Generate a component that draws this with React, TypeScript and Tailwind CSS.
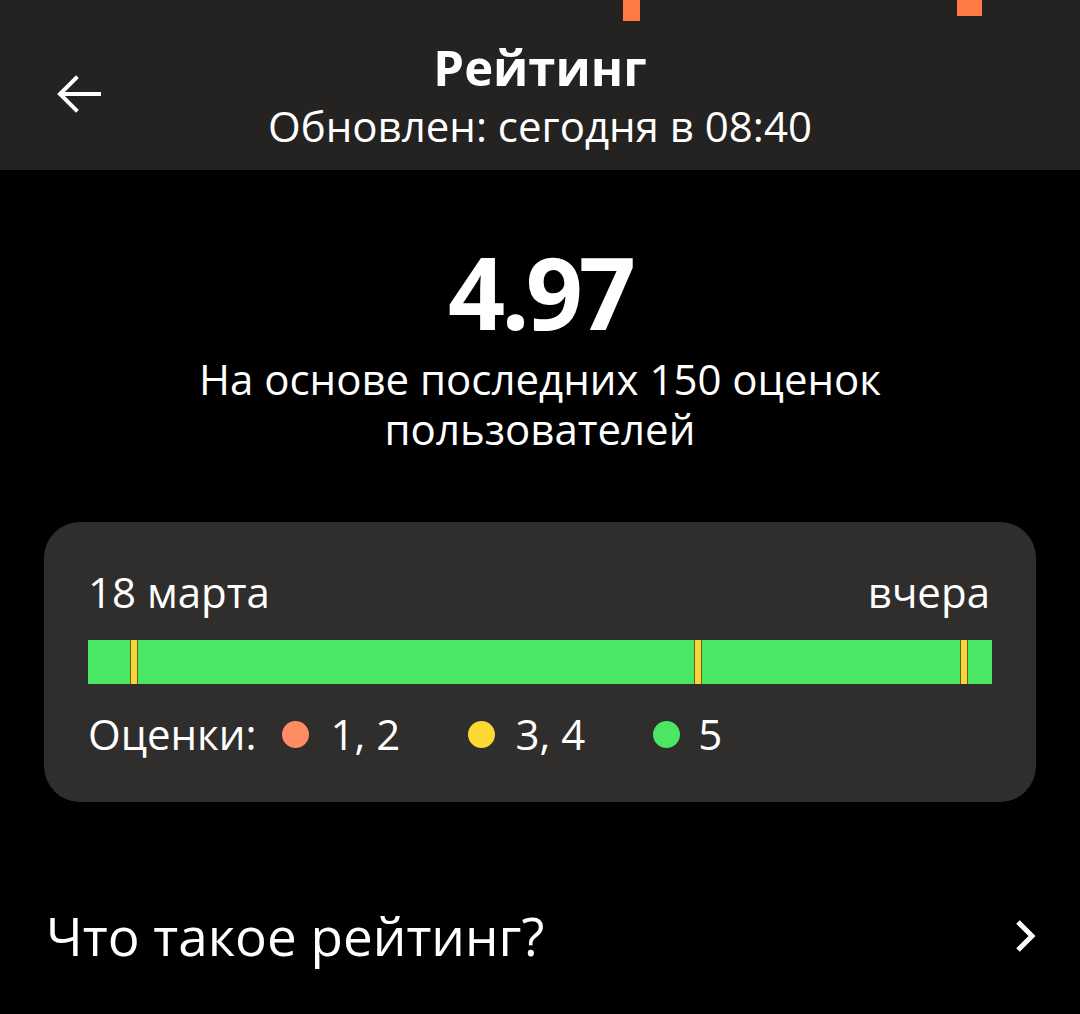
export default function App() {
  const font = { fontFamily: '"Open Sans", "Noto Sans", sans-serif' };
  return (
    <div className="w-[1080px] h-[1014px] bg-black text-white overflow-hidden" style={font}>
      <div className="relative h-[170px] bg-[#252321] flex flex-col items-center">
        <div className="absolute left-[623px] top-0 w-[17px] h-[21px] bg-[#ff7a45]" />
        <div className="absolute left-[957px] top-0 w-[25px] h-[16px] bg-[#ff7a45]" />
        <svg className="absolute left-[54px] top-[74px]" width="48" height="40" viewBox="0 0 48 40" fill="none">
          <path d="M45 20H7M22 4L6 20l16 16" stroke="white" strokeWidth="4" strokeLinecap="square" />
        </svg>
        <div className="mt-[38px] text-[49px] font-bold leading-[58px]">Рейтинг</div>
        <div className="text-[42px] leading-[60px]">Обновлен: сегодня в 08:40</div>
      </div>

      <div className="flex flex-col items-center">
        <div className="mt-[61px] text-[100px] font-bold leading-[120px] tracking-[-4px]">4.97</div>
        <div className="mt-[3px] text-[42px] leading-[50px] text-center">
          На основе последних 150 оценок
          <br />
          пользователей
        </div>
      </div>

      <div className="mx-[44px] mt-[68px] h-[280px] rounded-[36px] bg-[#2f2e2c] px-[44px] pt-[45px]">
        <div className="flex justify-between text-[42px] leading-[50px]">
          <span>18 марта</span>
          <span className="mr-[2px]">вчера</span>
        </div>
        <div className="relative mt-[23px] h-[44px] bg-[#4be663]">
          <div className="absolute left-[42px] top-0 h-full w-[8px] bg-[#f7d43a] border-x border-[#6a5a1a]" />
          <div className="absolute left-[606px] top-0 h-full w-[8px] bg-[#f7d43a] border-x border-[#6a5a1a]" />
          <div className="absolute left-[872px] top-0 h-full w-[8px] bg-[#f7d43a] border-x border-[#6a5a1a]" />
        </div>
        <div className="mt-[25px] flex items-center text-[42px] leading-[50px]">
          <span>Оценки:</span>
          <span className="ml-[25px] w-[27px] h-[27px] rounded-full bg-[#ff8c62]" />
          <span className="ml-[22px]">1, 2</span>
          <span className="ml-[68px] w-[27px] h-[27px] rounded-full bg-[#fcd932]" />
          <span className="ml-[20px]">3, 4</span>
          <span className="ml-[68px] w-[27px] h-[27px] rounded-full bg-[#4be663]" />
          <span className="ml-[18px]">5</span>
        </div>
      </div>

      <div className="mt-[102px] flex items-center justify-between pl-[46px] pr-[44px]">
        <span className="text-[53px] leading-[64px]">Что такое рейтинг?</span>
        <svg width="22" height="34" viewBox="0 0 22 34" fill="none">
          <path d="M4 3l14 14L4 31" stroke="white" strokeWidth="5" />
        </svg>
      </div>
    </div>
  );
}
